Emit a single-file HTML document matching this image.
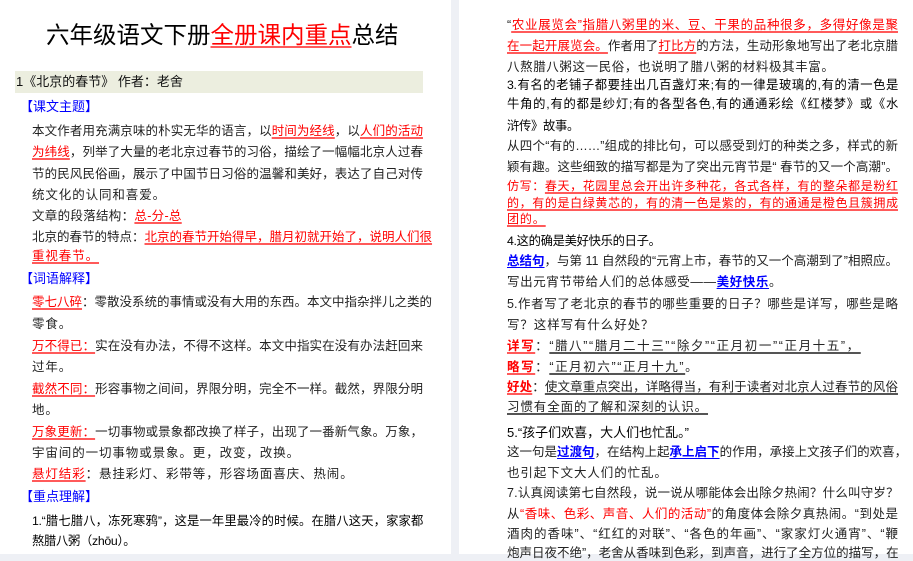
<!DOCTYPE html>
<html><head><meta charset="utf-8">
<style>
*{margin:0;padding:0;box-sizing:border-box}
body{width:913px;height:554px;overflow:hidden;background:#eef0f5;font-family:"Liberation Sans","Noto Sans CJK SC",sans-serif;color:#222;position:relative}
.pg{position:absolute;top:0;height:554px;background:#fff}
.l{position:absolute;white-space:nowrap;font-size:12.5px;line-height:16px;letter-spacing:0.9px}
.j{text-align:justify;text-align-last:justify;letter-spacing:0}
.r{color:#f00}
.u{text-decoration:underline;text-decoration-color:#ff5a5a;text-decoration-thickness:2px;text-underline-offset:2px}
.ub{color:#00f;text-decoration:underline;text-decoration-color:#00f;text-underline-offset:2px;font-weight:bold}
.ug{text-decoration:underline;text-decoration-color:#555;text-decoration-thickness:2px;text-underline-offset:2px}
.b{color:#00f;font-size:13px;letter-spacing:0}
.k{color:#000;font-size:12.3px;letter-spacing:-0.3px}
</style></head><body>
<div class="pg" style="left:0;width:451px"></div>
<div class="pg" style="left:459px;width:454px"></div>

<div class="l" style="left:46px;top:21px;font-size:23.5px;line-height:28px;letter-spacing:0;color:#000">六年级语文下册<span class="r" style="text-decoration:underline;text-decoration-color:#ff5a5a;text-decoration-thickness:2px;text-underline-offset:3px">全册课内重点</span>总结</div>
<div style="position:absolute;left:15px;top:71px;width:408px;height:22px;background:#eceedf"></div>
<div class="l" style="left:16px;top:74px;font-size:13px;line-height:16px;letter-spacing:0;color:#111">1《北京的春节》 作者：老舍</div>
<div class="l b" style="left:20px;top:99px">【课文主题】</div>
<div class="l j" style="left:32px;top:123px;width:391px">本文作者用充满京味的朴实无华的语言，以<span class="r u">时间为经线</span>，以<span class="r u">人们的活动</span></div>
<div class="l j" style="left:32px;top:144px;width:391px"><span class="r u">为纬线</span>，列举了大量的老北京过春节的习俗，描绘了一幅幅北京人过春</div>
<div class="l j" style="left:32px;top:166px;width:391px">节的民风民俗画，展示了中国节日习俗的温馨和美好，表达了自己对传</div>
<div class="l" style="left:32px;top:187px">统文化的认同和喜爱。</div>
<div class="l" style="left:32px;top:208px;letter-spacing:0.3px">文章的段落结构：<span class="r u">总-分-总</span></div>
<div class="l j" style="left:32px;top:229px;width:391px">北京的春节的特点：<span class="r u">北京的春节开始得早，腊月初就开始了，说明人们很</span></div>
<div class="l" style="left:32px;top:248px"><span class="r u">重视春节。</span></div>
<div class="l b" style="left:20px;top:271px">【词语解释】</div>
<div class="l j" style="left:32px;top:294px;width:391px"><span class="r u">零七八碎</span>：零散没系统的事情或没有大用的东西。本文中指杂拌儿之类的</div>
<div class="l" style="left:32px;top:316px">零食。</div>
<div class="l j" style="left:32px;top:338px;width:391px"><span class="r u">万不得已：</span>实在没有办法，不得不这样。本文中指实在没有办法赶回来</div>
<div class="l" style="left:32px;top:359px">过年。</div>
<div class="l j" style="left:32px;top:381px;width:391px"><span class="r u">截然不同：</span>形容事物之间间，界限分明，完全不一样。截然，界限分明</div>
<div class="l" style="left:32px;top:402px">地。</div>
<div class="l j" style="left:32px;top:424px;width:391px"><span class="r u">万象更新：</span>一切事物或景象都改换了样子，出现了一番新气象。万象，</div>
<div class="l" style="left:32px;top:445px">宇宙间的一切事物或景象。更，改变，改换。</div>
<div class="l" style="left:32px;top:466px"><span class="r u">悬灯结彩</span>：悬挂彩灯、彩带等，形容场面喜庆、热闹。</div>
<div class="l b" style="left:20px;top:489px">【重点理解】</div>
<div class="l j k" style="left:32px;top:513px;width:391px">1.“腊七腊八，冻死寒鸦”，这是一年里最冷的时候。在腊八这天，家家都</div>
<div class="l k" style="left:32px;top:533px">熬腊八粥（zhōu）。</div>

<div class="l j" style="left:507px;top:17px;width:391px">“<span class="r u">农业展览会”指腊八粥里的米、豆、干果的品种很多，多得好像是聚</span></div>
<div class="l j" style="left:507px;top:38px;width:391px"><span class="r u">在一起开展览会。</span>作者用了<span class="r u">打比方</span>的方法，生动形象地写出了老北京腊</div>
<div class="l" style="left:507px;top:59px;letter-spacing:0.6px">八熬腊八粥这一民俗，也说明了腊八粥的材料极其丰富。</div>
<div class="l j k" style="left:507px;top:77px;width:391px">3.有名的老铺子都要挂出几百盏灯来;有的一律是玻璃的,有的清一色是</div>
<div class="l j k" style="left:507px;top:96px;width:391px">牛角的,有的都是纱灯;有的各型各色,有的通通彩绘《红楼梦》或《水</div>
<div class="l k" style="left:507px;top:118px">浒传》故事。</div>
<div class="l j" style="left:507px;top:138px;width:391px">从四个“有的……”组成的排比句，可以感受到灯的种类之多，样式的新</div>
<div class="l j" style="left:507px;top:159px;width:391px">颖有趣。这些细致的描写都是为了突出元宵节是“ 春节的又一个高潮”。</div>
<div class="l j r" style="left:507px;top:178px;width:391px;font-size:12px">仿写：<span class="u">春天，花园里总会开出许多种花，各式各样，有的整朵都是粉红</span></div>
<div class="l j r" style="left:507px;top:195px;width:391px;font-size:12px"><span class="u">的，有的是白绿黄芯的，有的清一色是紫的，有的通通是橙色且簇拥成</span></div>
<div class="l r" style="left:507px;top:211px;font-size:12px"><span class="u">团的。 </span></div>
<div class="l k" style="left:507px;top:233px">4.这的确是美好快乐的日子。</div>
<div class="l j" style="left:507px;top:253px;width:391px"><span class="ub">总结句</span>，与第 11 自然段的“元宵上市，春节的又一个高潮到了”相照应。</div>
<div class="l" style="left:507px;top:274px;letter-spacing:0.6px">写出元宵节带给人们的总体感受——<span class="ub">美好快乐</span>。</div>
<div class="l j" style="left:507px;top:296px;width:391px">5.作者写了老北京的春节的哪些重要的日子？哪些是详写，哪些是略</div>
<div class="l" style="left:507px;top:317px">写？这样写有什么好处？</div>
<div class="l" style="left:507px;top:338px;letter-spacing:1.6px"><span class="r u" style="font-weight:bold">详写</span>：<span class="ug">“腊八”“腊月二十三”“除夕”“正月初一”“正月十五”，</span></div>
<div class="l" style="left:507px;top:359px;letter-spacing:1.6px"><span class="r u" style="font-weight:bold">略写</span>：<span class="ug">“正月初六”“正月十九”</span>。</div>
<div class="l j" style="left:507px;top:379px;width:391px"><span class="r u" style="font-weight:bold">好处</span>：<span class="ug">使文章重点突出，详略得当，有利于读者对北京人过春节的风俗</span></div>
<div class="l" style="left:507px;top:399px"><span class="ug">习惯有全面的了解和深刻的认识。</span></div>
<div class="l k" style="left:507px;top:425px;font-size:13px;letter-spacing:0">5.“孩子们欢喜，大人们也忙乱。”</div>
<div class="l j" style="left:507px;top:444px;width:391px">这一句是<span class="ub">过渡句</span>，在结构上起<span class="ub">承上启下</span>的作用，承接上文孩子们的欢喜，</div>
<div class="l" style="left:507px;top:465px">也引起下文大人们的忙乱。</div>
<div class="l" style="left:507px;top:485px;letter-spacing:0.2px">7.认真阅读第七自然段，说一说从哪能体会出除夕热闹？什么叫守岁？</div>
<div class="l j" style="left:507px;top:506px;width:391px">从<span class="r">“香味、色彩、声音、人们的活动”</span>的角度体会除夕真热闹。“到处是</div>
<div class="l j" style="left:507px;top:526px;width:391px">酒肉的香味”、“红红的对联”、“各色的年画”、“家家灯火通宵”、“鞭</div>
<div class="l j" style="left:507px;top:545px;width:391px">炮声日夜不绝”，老舍从香味到色彩，到声音，进行了全方位的描写，在</div>
</body></html>
